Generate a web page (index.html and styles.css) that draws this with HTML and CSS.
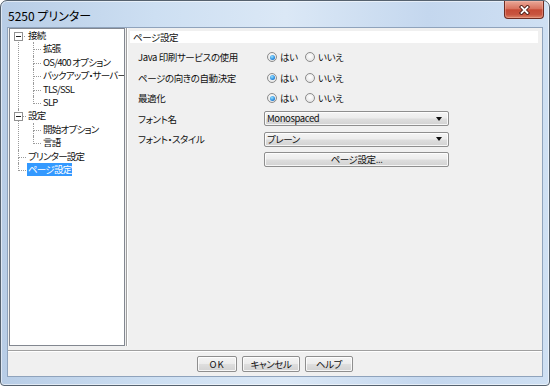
FILE: index.html
```html
<!DOCTYPE html>
<html lang="ja">
<head>
  <meta charset="UTF-8">
  <title>5250 プリンター</title>
  <link rel="stylesheet" href="styles.css">
</head>
<body>

  <div class="window">
    <!-- TITLE BAR -->
    <div class="titlebar">
      <span class="title">5250 プリンター</span>
      <button class="close-btn" aria-label="閉じる">
        <svg width="13" height="10" viewBox="0 0 13 10">
          <path d="M3.5 2 L9.5 8 M9.5 2 L3.5 8" stroke="#4b1b14" stroke-width="3.6" stroke-linecap="square"/>
          <path d="M3.5 2 L9.5 8 M9.5 2 L3.5 8" stroke="#fff" stroke-width="1.8" stroke-linecap="square"/>
        </svg>
      </button>
    </div>

    <div class="client">
      <div class="main">
        <!-- TREE -->
        <ul class="tree">
          <li><span class="toggle"></span><span class="node">接続</span>
            <ul>
              <li><span class="node">拡張</span></li>
              <li><span class="node">OS/400 オプション</span></li>
              <li><span class="node">バックアップ・サーバー</span></li>
              <li><span class="node">TLS/SSL</span></li>
              <li><span class="node">SLP</span></li>
            </ul>
          </li>
          <li><span class="toggle"></span><span class="node">設定</span>
            <ul>
              <li><span class="node">開始オプション</span></li>
              <li><span class="node">言語</span></li>
            </ul>
          </li>
          <li><span class="node">プリンター設定</span></li>
          <li><span class="node selected">ページ設定</span></li>
        </ul>

        <div class="splitter"></div>

        <!-- PAGE SETTINGS -->
        <section class="panel">
          <h2 class="panel-title">ページ設定</h2>
          <div class="form">
            <span class="label">Java 印刷サービスの使用</span>
            <div class="radios">
              <span class="opt"><span class="radio on"></span>はい</span>
              <span class="opt"><span class="radio"></span>いいえ</span>
            </div>

            <span class="label">ページの向きの自動決定</span>
            <div class="radios">
              <span class="opt"><span class="radio on"></span>はい</span>
              <span class="opt"><span class="radio"></span>いいえ</span>
            </div>

            <span class="label">最適化</span>
            <div class="radios">
              <span class="opt"><span class="radio on"></span>はい</span>
              <span class="opt"><span class="radio"></span>いいえ</span>
            </div>

            <span class="label">フォント名</span>
            <div class="combo"><span>Monospaced</span><span class="arrow"></span></div>

            <span class="label">フォント・スタイル</span>
            <div class="combo"><span>プレーン</span><span class="arrow"></span></div>

            <span></span>
            <button class="btn wide">ページ設定...</button>
          </div>
        </section>
      </div>

      <!-- BUTTONS -->
      <div class="buttonbar">
        <button class="btn ok">OK</button>
        <button class="btn cancel">キャンセル</button>
        <button class="btn help">ヘルプ</button>
      </div>
    </div>
  </div>

</body>
</html>
```

FILE: styles.css
```css
* {box-sizing:border-box; margin:0; padding:0;}
body {
  background:#fff;
  font-family:"Noto Sans CJK JP","Noto Sans",sans-serif;
  font-size:9.5px; color:#111; letter-spacing:-.4px;
  font-feature-settings:"palt";
}

/* window frame */
.window {
  width:550px; height:386px;
  border:1px solid #56626f; border-radius:7px 7px 4px 4px;
  padding:0 6px 8px 6px;
  background:linear-gradient(90deg,#b8cde6 0%,#cddff2 28%,#dbe8f6 52%,#c4d7ee 78%,#cfe0f3 100%);
  box-shadow:inset 0 0 0 1px rgba(255,255,255,.55);
}
.titlebar {
  height:26px; display:flex; justify-content:space-between; align-items:flex-start;
}
.title {font-size:12px; letter-spacing:0; line-height:26px; padding:2px 0 0 1px; color:#000;}
.close-btn {
  width:40px; height:18px; margin-right:-1px;
  display:flex; align-items:center; justify-content:center;
  border:1px solid #6e2c22; border-top:none; border-radius:0 0 4px 4px;
  background:linear-gradient(#eaa898,#d9735f 45%,#c54a35 52%,#c85540 80%,#dc8468);
  box-shadow:inset 0 0 0 1px rgba(255,200,190,.35);
}

.client {
  height:350px; background:#f0f0f0;
  border:1px solid #8fa3bc;
  display:flex; flex-direction:column;
}
.main {height:322px; display:flex;}

/* tree */
.tree, .tree ul {list-style:none;}
.tree {
  width:116px; height:318px; margin-left:1px; flex-shrink:0;
  background:#fff; border:1px solid #828790;
  line-height:13.4px; letter-spacing:-.75px; overflow:hidden;
}
.tree li {position:relative; white-space:nowrap;}
.tree > li {padding-left:17px;}
.tree ul li {padding-left:15px;}
.tree li::before {
  content:''; position:absolute; left:8px; top:0; width:7px; height:7px;
  border-left:1px dotted #9a9a9a; border-bottom:1px dotted #9a9a9a;
}
.tree li::after {
  content:''; position:absolute; left:8px; top:7px; bottom:0;
  border-left:1px dotted #9a9a9a;
}
.tree ul li::before, .tree ul li::after {left:6px;}
.tree ul li::before {width:7px;}
.tree li:last-child::after {display:none;}
.tree > li:first-child::before {border-left:none;}
.toggle {
  position:absolute; left:4px; top:3px; z-index:1;
  width:9px; height:9px; border:1px solid #919191; background:#fff;
}
.toggle::after {
  content:''; position:absolute; left:1px; top:3px; width:5px; height:1px; background:#222;
}
.node {display:inline-block; height:13.4px; padding:0 1px;}
.node.selected {background:#3399ff; color:#fff;}

.splitter {
  width:2px; height:318px; margin-left:1px; flex-shrink:0;
  border-left:1px solid #a0a0a0; border-right:1px solid #fff;
}

/* settings panel */
.panel {flex:1;}
.panel-title {
  margin:3px 4px 0 2px; height:12px; padding-left:3px;
  background:#fff; font-size:9.5px; font-weight:normal; line-height:12px;
}
.form {
  display:grid; grid-template-columns:126px 185px; grid-auto-rows:15px;
  row-gap:5.6px; align-items:center;
  margin:6.5px 0 0 10px;
}
.label {white-space:nowrap;}
.radios {display:flex; align-items:center; white-space:nowrap;}
.opt {display:flex; align-items:center; width:38px;}
.opt:first-child {margin-left:3px;}
.opt:last-child {width:auto;}
.radio {
  width:10px; height:10px; border-radius:50%; margin-right:3px; flex-shrink:0;
  border:1px solid #8c8c8c;
  background:radial-gradient(circle at 50% 40%,#fff,#dedede);
  display:flex; align-items:center; justify-content:center;
}
.radio.on::after {
  content:''; width:5px; height:5px; border-radius:50%;
  background:radial-gradient(circle at 40% 35%,#9ae4ff,#2a8ce0 60%,#0f4f9c);
}

.combo, .btn {
  height:15px; border:1px solid #8e8e8e; border-radius:2px;
  background:linear-gradient(#f4f4f4,#ececec 48%,#dedede 52%,#d2d2d2);
  box-shadow:inset 0 0 0 1px rgba(255,255,255,.8);
  font-family:inherit; font-size:9.5px; letter-spacing:-.4px; color:#111;
}
.combo {
  display:flex; align-items:center; justify-content:space-between;
  padding:0 6px 0 2px; line-height:13px;
}
.arrow {
  width:0; height:0;
  border-left:3px solid transparent; border-right:3px solid transparent;
  border-top:4px solid #111;
}
.btn {line-height:13px; font-feature-settings:"palt";}

.buttonbar {
  flex:1; display:flex; justify-content:center; align-items:center; gap:5px;
  border-top:1px solid #a0a0a0; box-shadow:inset 0 1px #fff;
  padding-top:1px;
}
.buttonbar .btn {height:16px;}
.ok {width:40px; letter-spacing:1px;}
.cancel {width:58px;}
.help {width:48px;}
```
